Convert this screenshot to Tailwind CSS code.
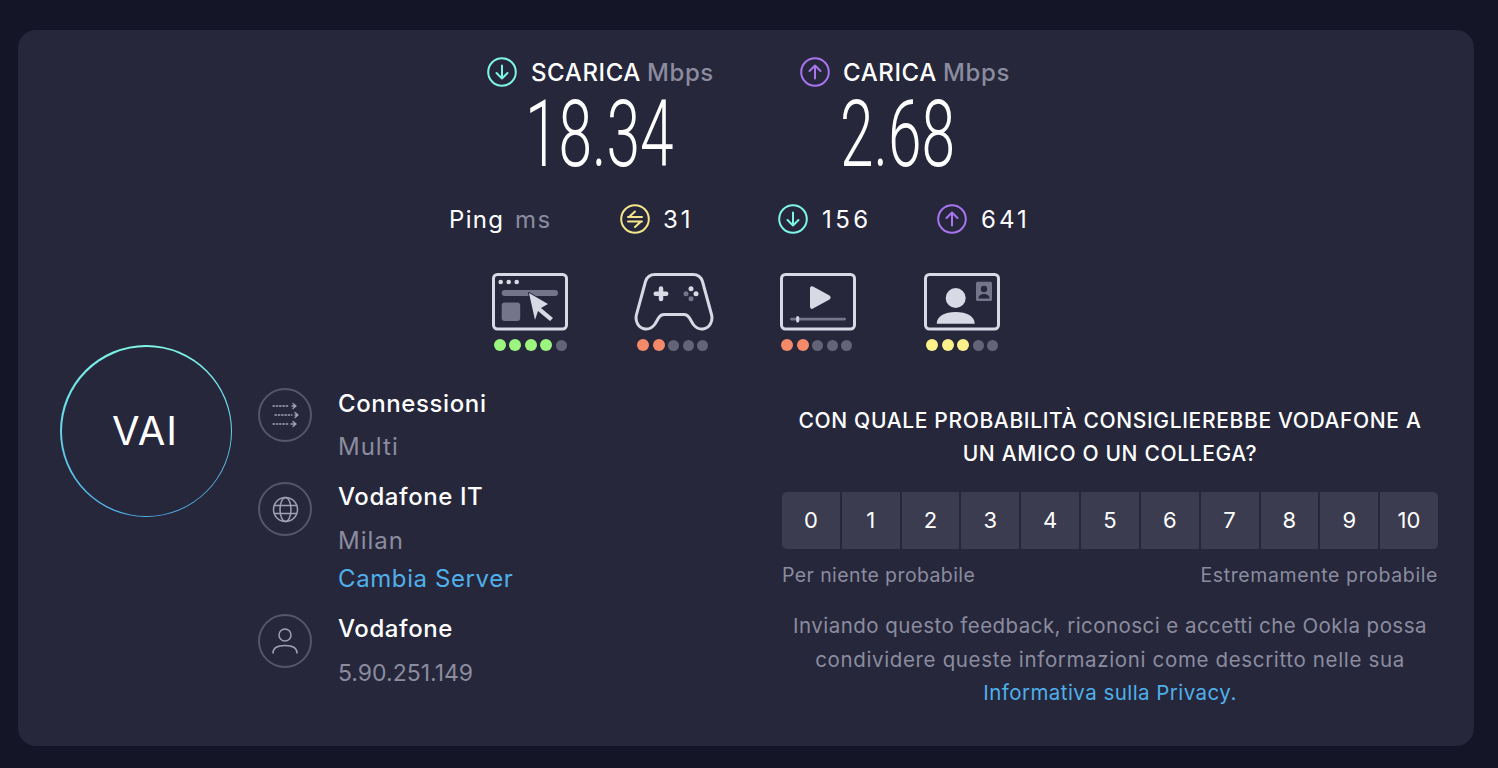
<!doctype html>
<html><head><meta charset="utf-8"><script src="https://cdn.jsdelivr.net/npm/@tailwindcss/browser@4"></script></head>
<body class="bg-[#141526] w-[1498px] h-[768px] overflow-hidden font-['Inter','Noto_Sans',sans-serif]">
<div class="pt-[30px] pl-[18px]">
<main class="w-[1456px] h-[716px] rounded-[18px] bg-[#26273b] text-white">
  <section class="h-[315px]">
    <div class="flex pl-[469px] pt-[27px] h-[155px]">
      <div class="w-[313px]">
        <div class="flex items-center h-[30px]">
          <svg class="w-[30px] h-[30px] mr-[14px]" viewBox="0 0 30 30" fill="none" stroke="#7ef5e6" stroke-width="2" stroke-linecap="round" stroke-linejoin="round"><circle cx="15" cy="15" r="13.800"/><path d="M15 8.500v13M9.500 16l5.500 5.500 5.500-5.500"/></svg>
          <span class="text-[24px] font-medium tracking-[0.6px] pt-[2px]">SCARICA</span><span class="text-[24px] font-medium text-[#8b8c9f] ml-[6px] tracking-[0.6px] pt-[2px]">Mbps</span>
        </div>
        <div class="font-['Roboto'] font-light text-[93px] leading-[80px] mt-[8px] ml-[38px] origin-left scale-x-[0.65] whitespace-nowrap">18.34</div>
      </div>
      <div>
        <div class="flex items-center h-[30px]">
          <svg class="w-[30px] h-[30px] mr-[13px]" viewBox="0 0 30 30" fill="none" stroke="#a974f0" stroke-width="2" stroke-linecap="round" stroke-linejoin="round"><circle cx="15" cy="15" r="13.800"/><path d="M15 21.500v-13M9.500 14l5.500-5.500 5.500 5.500"/></svg>
          <span class="text-[24px] font-medium tracking-[0.6px] pt-[2px]">CARICA</span><span class="text-[24px] font-medium text-[#8b8c9f] ml-[6px] tracking-[0.7px] pt-[2px]">Mbps</span>
        </div>
        <div class="font-['Roboto'] font-light text-[93px] leading-[80px] mt-[8px] ml-[40px] origin-left scale-x-[0.65] whitespace-nowrap">2.68</div>
      </div>
    </div>
    <div class="flex items-center pl-[431px] h-[30px] mt-[19px] text-[24px]">
      <span class="w-[66px] tracking-[1.300px] pt-[2px]">Ping</span><span class="w-[105px] text-[#8b8c9f] tracking-[1.500px] pt-[2px]">ms</span>
      <svg class="w-[30px] h-[30px] mr-[13px]" viewBox="0 0 30 30" fill="none" stroke="#f5e68c" stroke-width="2" stroke-linecap="round" stroke-linejoin="round"><circle cx="15" cy="15" r="13.800"/><path d="M8 13h14M15 7.500 9 13M8 17.500h14M15 23l6-5.500"/></svg>
      <span class="w-[115px] tracking-[3px] pt-[2px]">31</span>
      <svg class="w-[30px] h-[30px] mr-[14px]" viewBox="0 0 30 30" fill="none" stroke="#7ef5e6" stroke-width="2" stroke-linecap="round" stroke-linejoin="round"><circle cx="15" cy="15" r="13.800"/><path d="M15 8.500v13M9.500 16l5.500 5.500 5.500-5.500"/></svg>
      <span class="w-[115px] tracking-[3.500px] pt-[2px]">156</span>
      <svg class="w-[30px] h-[30px] mr-[14px]" viewBox="0 0 30 30" fill="none" stroke="#a974f0" stroke-width="2" stroke-linecap="round" stroke-linejoin="round"><circle cx="15" cy="15" r="13.800"/><path d="M15 21.500v-13M9.500 14l5.500-5.500 5.500 5.500"/></svg>
      <span class="tracking-[3px] pt-[2px]">641</span>
    </div>
    <div class="flex gap-[64px] pl-[472px] mt-[39px]">
      <div class="w-[80px]">
        <svg class="w-[80px] h-[58px]" viewBox="0 0 80 58" fill="none">
          <rect x="3.500" y="1.500" width="73" height="54.500" rx="4" stroke="#d7d9e4" stroke-width="3"/>
          <circle cx="10.700" cy="9" r="2.300" fill="#d7d9e4"/><circle cx="18.700" cy="9" r="2.300" fill="#d7d9e4"/><circle cx="26.700" cy="9" r="2.300" fill="#d7d9e4"/>
          <rect x="11.700" y="17" width="56.300" height="6" rx="3" fill="#74758a"/><rect x="11.700" y="29.500" width="18.500" height="18.500" rx="3" fill="#74758a"/>
          <path d="M39 20l19 11-7 4 12 10-3 3-12-10-3 9z" fill="#d7d9e4" stroke="#26273b" stroke-width="2" stroke-linejoin="round" paint-order="stroke"/>
        </svg>
        <div class="flex justify-center items-center gap-[3.500px] mt-[8px]"><i class="w-3 h-3 rounded-full bg-[#9bf57f]"></i><i class="w-3 h-3 rounded-full bg-[#9bf57f]"></i><i class="w-3 h-3 rounded-full bg-[#9bf57f]"></i><i class="w-3 h-3 rounded-full bg-[#9bf57f]"></i><i class="w-[11px] h-[11px] rounded-full bg-[#636478]"></i></div>
      </div>
      <div class="w-[80px]">
        <svg class="w-[80px] h-[58px]" viewBox="0 0 80 58" fill="none">
          <path d="M21 1.500h38c4.500 0 8 2.500 9.500 7l9 33c1.800 7-2 13.500-8.500 14.500-4 .5-7.500-1.500-10-5l-3.500-6c-1.500-2.500-3-3.500-5.500-3.500h-20c-2.500 0-4 1-5.500 3.500l-3.500 6c-2.500 3.500-6 5.500-10 5-6.500-1-10.300-7.500-8.500-14.500l9-33c1.500-4.500 5-7 9.500-7z" stroke="#d7d9e4" stroke-width="3" stroke-linejoin="round"/>
          <path d="M27 15.500v10.500M21.700 20.700h10.500" stroke="#d7d9e4" stroke-width="4.500" stroke-linecap="round"/>
          <circle cx="57" cy="15.700" r="2.500" fill="#d7d9e4"/><circle cx="62" cy="20.700" r="2.500" fill="#d7d9e4"/><circle cx="52" cy="20.700" r="2.500" fill="#74758a"/><circle cx="57" cy="25.700" r="2.500" fill="#74758a"/>
        </svg>
        <div class="flex justify-center items-center gap-[3.500px] mt-[8px] ml-[-3px]"><i class="w-3 h-3 rounded-full bg-[#f58a68]"></i><i class="w-3 h-3 rounded-full bg-[#f58a68]"></i><i class="w-[11px] h-[11px] rounded-full bg-[#636478]"></i><i class="w-[11px] h-[11px] rounded-full bg-[#636478]"></i><i class="w-[11px] h-[11px] rounded-full bg-[#636478]"></i></div>
      </div>
      <div class="w-[80px]">
        <svg class="w-[80px] h-[58px]" viewBox="0 0 80 58" fill="none">
          <rect x="3.500" y="1.500" width="73" height="54.500" rx="4" stroke="#d7d9e4" stroke-width="3"/>
          <path d="M32 15.500c0-2 1.500-2.800 3-2l16.500 9c1.500 1 1.500 3 0 4l-16.500 9c-1.500 1-3 0-3-2z" fill="#d7d9e4"/>
          <rect x="12" y="44.700" width="56" height="2.800" rx="1.400" fill="#74758a"/><rect x="18.200" y="43" width="3" height="6.500" rx="1.500" fill="#d7d9e4"/>
        </svg>
        <div class="flex justify-center items-center gap-[3.500px] mt-[8px] ml-[-3px]"><i class="w-3 h-3 rounded-full bg-[#f58a68]"></i><i class="w-3 h-3 rounded-full bg-[#f58a68]"></i><i class="w-[11px] h-[11px] rounded-full bg-[#636478]"></i><i class="w-[11px] h-[11px] rounded-full bg-[#636478]"></i><i class="w-[11px] h-[11px] rounded-full bg-[#636478]"></i></div>
      </div>
      <div class="w-[80px]">
        <svg class="w-[80px] h-[58px]" viewBox="0 0 80 58" fill="none">
          <rect x="3.500" y="1.500" width="73" height="54.500" rx="4" stroke="#d7d9e4" stroke-width="3"/>
          <circle cx="33.700" cy="25" r="10" fill="#d7d9e4"/>
          <path d="M14.700 50.700c0-7.500 8-11.700 19-11.700s19 4.200 19 11.700z" fill="#d7d9e4"/>
          <rect x="54" y="8.700" width="16" height="19.300" rx="1.500" fill="#74758a"/>
          <circle cx="62" cy="16" r="3.200" fill="#26273b"/><path d="M56.500 25.500c0-3 2.500-4.500 5.500-4.500s5.500 1.500 5.500 4.500z" fill="#26273b"/>
        </svg>
        <div class="flex justify-center items-center gap-[3.500px] mt-[8px]"><i class="w-3 h-3 rounded-full bg-[#fbf08a]"></i><i class="w-3 h-3 rounded-full bg-[#fbf08a]"></i><i class="w-3 h-3 rounded-full bg-[#fbf08a]"></i><i class="w-[11px] h-[11px] rounded-full bg-[#636478]"></i><i class="w-[11px] h-[11px] rounded-full bg-[#636478]"></i></div>
      </div>
    </div>
  </section>

  <section class="flex pl-[42px]">
    <div class="w-[172px] h-[172px] rounded-full p-[1.500px] bg-linear-to-b from-[#7ef5e6] to-[#4fb0ea] shrink-0">
      <div class="w-full h-full rounded-full bg-[#26273b] flex items-center justify-center text-[40px] font-normal tracking-[1px] pr-[2px]">VAI</div>
    </div>
    <div class="w-[524px] ml-[26px] pt-[43px] shrink-0">
      <div class="flex h-[94px]">
        <div class="w-[54px] h-[54px] rounded-full border-2 border-[#55566a] flex items-center justify-center mr-[26px]">
          <svg class="w-[28px] h-[28px]" viewBox="0 0 28 28" fill="none" stroke="#a0a1b2" stroke-width="1.300" stroke-linecap="round" stroke-linejoin="round"><path stroke-dasharray="1.500 1.800" d="M2 5h16M4 14h17M2 23h15"/><path d="M21 5h4M22 2.500 25 5l-3 2.500M24 14h3M24 11.500l3 2.500-3 2.500M20 23h5M22 20.500l3 2.500-3 2.500"/></svg>
        </div>
        <div><div class="text-[24px] leading-[32px] font-medium tracking-[0.6px]">Connessioni</div><div class="text-[24px] leading-[32px] mt-[11px] text-[#8b8c9f] tracking-[1px]">Multi</div></div>
      </div>
      <div class="flex h-[132px]">
        <div class="w-[54px] h-[54px] rounded-full border-2 border-[#55566a] flex items-center justify-center mr-[26px]">
          <svg class="w-[27px] h-[27px]" viewBox="0 0 27 27" fill="none" stroke="#a0a1b2" stroke-width="1.500"><circle cx="13.500" cy="13.500" r="12"/><ellipse cx="13.500" cy="13.500" rx="5.500" ry="12"/><path d="M2 9.500h23M2 17.500h23"/></svg>
        </div>
        <div class="mt-[-1px]"><div class="text-[24px] leading-[32px] font-medium tracking-[0.6px]">Vodafone IT</div><div class="text-[24px] leading-[32px] mt-[12px] text-[#8b8c9f] tracking-[1px]">Milan</div><div class="text-[24px] leading-[32px] mt-[6px] text-[#4fb0ea] tracking-[0.6px]">Cambia Server</div></div>
      </div>
      <div class="flex">
        <div class="w-[54px] h-[54px] rounded-full border-2 border-[#55566a] flex items-center justify-center mr-[26px]">
          <svg class="w-[28px] h-[28px]" viewBox="0 0 28 28" fill="none" stroke="#a0a1b2" stroke-width="1.500" stroke-linecap="round"><circle cx="14" cy="8" r="6"/><path d="M2 26c0-5 5-7.500 12-7.500S26 21 26 26"/></svg>
        </div>
        <div class="mt-[-1px]"><div class="text-[24px] leading-[32px] font-medium tracking-[0.6px]">Vodafone</div><div class="text-[23px] leading-[32px] mt-[12px] text-[#8b8c9f]">5.90.251.149</div></div>
      </div>
    </div>
    <div class="w-[656px] shrink-0 pt-[59px]">
      <div class="text-center text-[21px] leading-[33px] font-medium tracking-[0.65px] whitespace-nowrap">CON QUALE PROBABILITÀ CONSIGLIEREBBE VODAFONE A<br>UN AMICO O UN COLLEGA?</div>
      <div class="flex gap-[2px] mt-[22px] h-[57px] rounded-[5px] overflow-hidden text-[22px]">
        <div class="flex-1 bg-[#3b3c50] flex items-center justify-center">0</div><div class="flex-1 bg-[#3b3c50] flex items-center justify-center">1</div><div class="flex-1 bg-[#3b3c50] flex items-center justify-center">2</div><div class="flex-1 bg-[#3b3c50] flex items-center justify-center">3</div><div class="flex-1 bg-[#3b3c50] flex items-center justify-center">4</div><div class="flex-1 bg-[#3b3c50] flex items-center justify-center">5</div><div class="flex-1 bg-[#3b3c50] flex items-center justify-center">6</div><div class="flex-1 bg-[#3b3c50] flex items-center justify-center">7</div><div class="flex-1 bg-[#3b3c50] flex items-center justify-center">8</div><div class="flex-1 bg-[#3b3c50] flex items-center justify-center">9</div><div class="flex-1 bg-[#3b3c50] flex items-center justify-center">10</div>
      </div>
      <div class="flex justify-between mt-[14px] text-[19.500px] leading-[24px] text-[#8b8c9f]"><span class="tracking-[0.4px]">Per niente probabile</span><span class="tracking-[0.6px]">Estremamente probabile</span></div>
      <div class="text-center text-[20.500px] leading-[33.500px] mt-[22px] text-[#8b8c9f] tracking-[0.45px] whitespace-nowrap">Inviando questo feedback, riconosci e accetti che Ookla possa<br><span class="tracking-[0.65px]">condividere queste informazioni come descritto nelle sua</span><br><span class="text-[#4fb0ea]">Informativa sulla Privacy.</span></div>
    </div>
  </section>
</main>
</div>
</body></html>
